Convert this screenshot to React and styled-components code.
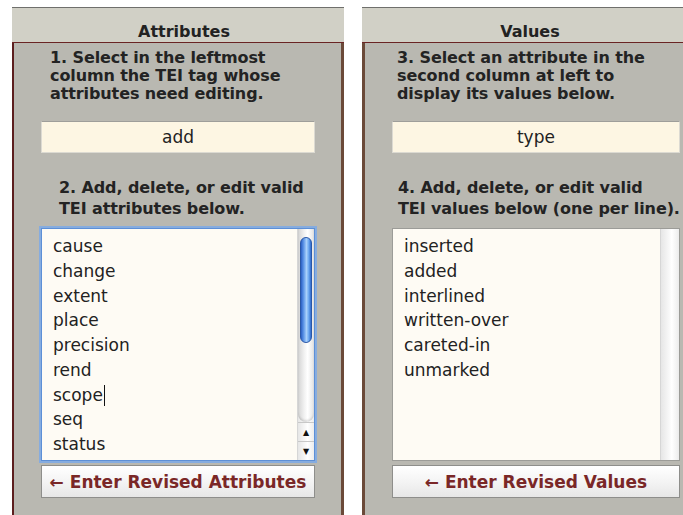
import React from "react";
import styled, { createGlobalStyle } from "styled-components";

const GlobalStyle = createGlobalStyle`
    html, body {
        margin: 0;
        padding: 0;
        background: #ffffff;
    }
    body {
        font-family: "DejaVu Sans", "Liberation Sans", sans-serif;
        color: #222;
    }
`;

const Page = styled.div`
    display: flex;
    gap: 18px;
    width: 683px;
    height: 515px;
    padding: 7px 0 0 12px;
    box-sizing: border-box;
    overflow: hidden;
`;

const Panel = styled.div`
    display: flex;
    flex-direction: column;
    flex: 0 0 ${({ $width }) => $width}px;
`;

const Header = styled.div`
    height: 36px;
    display: flex;
    align-items: flex-end;
    justify-content: center;
    box-sizing: border-box;
    padding: 0 0 1px ${({ $offset }) => $offset || 0}px;
    background: #d1d0c6;
    border-top: 1px solid #6f6f6c;
    border-bottom: 1px solid #6a2424;
    font-size: 16px;
    font-weight: bold;
    line-height: 18px;
    color: #222;
`;

const Body = styled.div`
    flex: 1;
    display: flex;
    flex-direction: column;
    background: #b9b8b1;
    padding: 6px ${({ $padRight }) => $padRight}px 0 ${({ $padLeft }) => $padLeft}px;
    border-left: ${({ $leftBorder }) => $leftBorder};
    border-right: ${({ $rightBorder }) => $rightBorder || "none"};
`;

const Instruction = styled.div`
    padding-left: ${({ $indent }) => $indent}px;
    margin-top: ${({ $top }) => $top}px;
    font-size: 16px;
    font-weight: bold;
    line-height: ${({ $lh }) => $lh}px;
    letter-spacing: -0.1px;
    white-space: nowrap;
    color: #232323;
`;

const Field = styled.div`
    margin-top: 18px;
    height: 32px;
    box-sizing: border-box;
    display: flex;
    align-items: center;
    justify-content: center;
    background: #fdf6e3;
    border: 1px solid #dcdad2;
    border-top-color: #9e9e9a;
    font-size: 17px;
    color: #222;
`;

const ListBox = styled.div`
    margin-top: 9px;
    height: 233px;
    box-sizing: border-box;
    display: flex;
    background: #fefbf4;
    border: 1px solid ${({ $focused }) => ($focused ? "#5d8fd6" : "#9c9c98")};
    box-shadow: ${({ $focused }) => ($focused ? "0 0 0 2px #86acdf" : "none")};
`;

const ListText = styled.div`
    flex: 1;
    padding: 5px 0 0 11px;
    font-size: 17px;
    line-height: 24.75px;
    color: #222;
`;

const Caret = styled.span`
    display: inline-block;
    width: 1px;
    height: 21px;
    margin-left: 1px;
    background: #111;
    vertical-align: -5px;
`;

const Scrollbar = styled.div`
    flex: 0 0 ${({ $width }) => $width}px;
    display: flex;
    flex-direction: column;
    border-left: 1px solid #d6d6d6;
    background: linear-gradient(to right, #e6e6e6, #f8f8f8 45%, #ffffff 60%, #ececec);
`;

const Track = styled.div`
    flex: 1;
    padding: 8px 2px 0 2px;
    border-radius: 0 0 8px 8px;
    background: linear-gradient(to right, #d4d4d4, #f2f2f2 40%, #ffffff 60%, #e2e2e2);
    box-shadow: inset 0 -2px 2px rgba(0, 0, 0, 0.12);
`;

const Thumb = styled.div`
    height: 106px;
    border-radius: 7px;
    box-sizing: border-box;
    border: 1px solid #2a57a8;
    background: linear-gradient(
        to right,
        #2c60c4,
        #5b93e6 25%,
        #a8d0fb 55%,
        #6aa6ef 78%,
        #2f69cc
    );
`;

const Arrow = styled.div`
    height: 18px;
    display: flex;
    align-items: center;
    justify-content: center;
    border-top: 1px solid #c8c8c8;
    font-size: 8px;
    color: #111;
`;

const Button = styled.div`
    margin-top: 4px;
    height: 33px;
    box-sizing: border-box;
    display: flex;
    align-items: center;
    justify-content: center;
    border: 1px solid #8e8e8b;
    background: linear-gradient(#ffffff, #f4f4f4 50%, #e7e7e7);
    color: #7a2727;
    font-size: 17px;
    font-weight: bold;
    white-space: nowrap;
`;

const attributes = ["cause", "change", "extent", "place", "precision", "rend", "scope", "seq", "status"];
const values = ["inserted", "added", "interlined", "written-over", "careted-in", "unmarked"];

const Lines = ({ lines }) =>
    lines.map((line, i) => (
        <React.Fragment key={i}>
            {line}
            {i < lines.length - 1 && <br />}
        </React.Fragment>
    ));

const App = () => {
    return (
        <>
            <GlobalStyle />
            <Page>
                <Panel $width={332}>
                    <Header $offset={12}>Attributes</Header>
                    <Body
                        $padLeft={27}
                        $padRight={26}
                        $leftBorder="2px solid #5c1e1e"
                        $rightBorder="3px solid #6b4a39"
                    >
                        <Instruction $indent={9} $top={0} $lh={18}>
                            <Lines
                                lines={[
                                    "1. Select in the leftmost",
                                    "column the TEI tag whose",
                                    "attributes need editing.",
                                ]}
                            />
                        </Instruction>
                        <Field>add</Field>
                        <Instruction $indent={18} $top={24} $lh={21}>
                            <Lines lines={["2. Add, delete, or edit valid", "TEI attributes below."]} />
                        </Instruction>
                        <ListBox $focused>
                            <ListText>
                                {attributes.map((a) => (
                                    <div key={a}>
                                        {a}
                                        {a === "scope" && <Caret />}
                                    </div>
                                ))}
                            </ListText>
                            <Scrollbar $width={16}>
                                <Track>
                                    <Thumb />
                                </Track>
                                <Arrow>▲</Arrow>
                                <Arrow>▼</Arrow>
                            </Scrollbar>
                        </ListBox>
                        <Button>← Enter Revised Attributes</Button>
                    </Body>
                </Panel>
                <Panel $width={321}>
                    <Header>Values</Header>
                    <Body $padLeft={27} $padRight={18} $leftBorder="3px solid #6b4a39">
                        <Instruction $indent={5} $top={0} $lh={18}>
                            <Lines
                                lines={[
                                    "3. Select an attribute in the",
                                    "second column at left to",
                                    "display its values below.",
                                ]}
                            />
                        </Instruction>
                        <Field>type</Field>
                        <Instruction $indent={6} $top={24} $lh={21}>
                            <Lines lines={["4. Add, delete, or edit valid", "TEI values below (one per line)."]} />
                        </Instruction>
                        <ListBox>
                            <ListText>
                                {values.map((v) => (
                                    <div key={v}>{v}</div>
                                ))}
                            </ListText>
                            <Scrollbar $width={18} />
                        </ListBox>
                        <Button>← Enter Revised Values</Button>
                    </Body>
                </Panel>
            </Page>
        </>
    );
};

export default App;
